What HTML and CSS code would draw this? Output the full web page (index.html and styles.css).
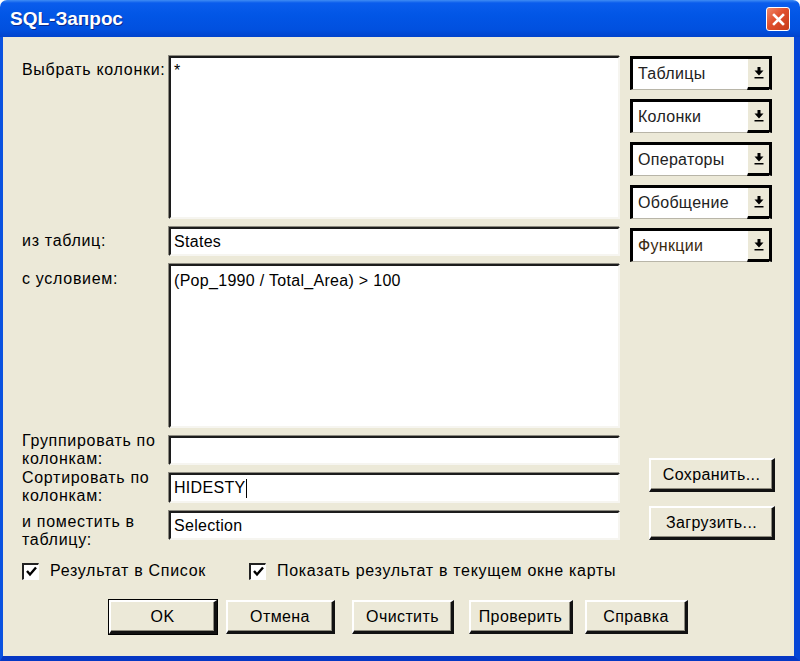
FILE: index.html
```html
<!DOCTYPE html>
<html lang="ru">
<head>
  <meta charset="UTF-8" />
  <title>SQL-Запрос</title>
  <link rel="stylesheet" href="styles.css">
</head>
<body>

  <div class="window">

    <!-- заголовок окна -->
    <div class="titlebar">
      <span class="title">SQL-Запрос</span>
      <button class="close-btn" title="Закрыть">
        <svg width="13" height="13" viewBox="0 0 13 13">
          <path d="M2 2 L11 11 M11 2 L2 11" stroke="#fff" stroke-width="2.6" stroke-linecap="square" />
        </svg>
      </button>
    </div>

    <div class="frame">
      <div class="client">

        <div class="main">
          <!-- поля запроса -->
          <div class="form">
            <label class="lbl">Выбрать колонки:</label>
            <div class="field area area-cols">*</div>

            <label class="lbl">из таблиц:</label>
            <div class="field input">States</div>

            <label class="lbl lbl-where">с условием:</label>
            <div class="field area area-where">(Pop_1990 / Total_Area) &gt; 100</div>

            <label class="lbl lbl-wrap">Группировать по<br>колонкам:</label>
            <div class="field input"></div>

            <label class="lbl lbl-wrap">Сортировать по<br>колонкам:</label>
            <div class="field input input-tall">HIDESTY<span class="caret"></span></div>

            <label class="lbl lbl-wrap lbl-into">и поместить в<br>таблицу:</label>
            <div class="field input">Selection</div>
          </div>

          <!-- списки и кнопки справа -->
          <div class="side">
            <div class="combo"><span class="combo-text">Таблицы</span><span class="combo-btn"><svg width="10" height="12" viewBox="0 0 10 12"><path d="M3.5 0h3v3.5h3L5 8.5 0.5 3.5h3z M0.5 10h9v1.6h-9z" fill="#000"/></svg></span></div>
            <div class="combo"><span class="combo-text">Колонки</span><span class="combo-btn"><svg width="10" height="12" viewBox="0 0 10 12"><path d="M3.5 0h3v3.5h3L5 8.5 0.5 3.5h3z M0.5 10h9v1.6h-9z" fill="#000"/></svg></span></div>
            <div class="combo"><span class="combo-text">Операторы</span><span class="combo-btn"><svg width="10" height="12" viewBox="0 0 10 12"><path d="M3.5 0h3v3.5h3L5 8.5 0.5 3.5h3z M0.5 10h9v1.6h-9z" fill="#000"/></svg></span></div>
            <div class="combo"><span class="combo-text">Обобщение</span><span class="combo-btn"><svg width="10" height="12" viewBox="0 0 10 12"><path d="M3.5 0h3v3.5h3L5 8.5 0.5 3.5h3z M0.5 10h9v1.6h-9z" fill="#000"/></svg></span></div>
            <div class="combo"><span class="combo-text combo-text-brown">Функции</span><span class="combo-btn"><svg width="10" height="12" viewBox="0 0 10 12"><path d="M3.5 0h3v3.5h3L5 8.5 0.5 3.5h3z M0.5 10h9v1.6h-9z" fill="#000"/></svg></span></div>

            <div class="side-buttons">
              <button class="btn btn-side">Сохранить...</button>
              <button class="btn btn-side">Загрузить...</button>
            </div>
          </div>
        </div>

        <!-- флажки -->
        <div class="checks">
          <label class="check">
            <span class="box"><svg width="13" height="13" viewBox="0 0 13 13"><path d="M2 6 L5 9.5 L11 2.5" fill="none" stroke="#000" stroke-width="2.4"/></svg></span>
            Результат в Список
          </label>
          <label class="check">
            <span class="box"><svg width="13" height="13" viewBox="0 0 13 13"><path d="M2 6 L5 9.5 L11 2.5" fill="none" stroke="#000" stroke-width="2.4"/></svg></span>
            Показать результат в текущем окне карты
          </label>
        </div>

        <!-- нижние кнопки -->
        <div class="actions">
          <button class="btn btn-default btn-ok">OK</button>
          <button class="btn btn-cancel">Отмена</button>
          <button class="btn btn-clear">Очистить</button>
          <button class="btn btn-verify">Проверить</button>
          <button class="btn btn-help">Справка</button>
        </div>

      </div>
    </div>
  </div>

</body>
</html>
```

FILE: styles.css
```css
/* ---------------------------------------------
   общее
--------------------------------------------- */
body {
  margin: 0;
  background: #fff;
  font-family: "Liberation Sans", Arial, sans-serif;
}

.window {
  width: 800px;
  height: 661px;
  display: flex;
  flex-direction: column;
}

/* ---------------------------------------------
   заголовок
--------------------------------------------- */
.titlebar {
  height: 37px;
  flex: none;
  display: flex;
  align-items: center;
  justify-content: space-between;
  padding: 0 10px 0 10px;
  box-sizing: border-box;
  border-radius: 7px 7px 0 0;
  background: linear-gradient(#3f8cf4 0, #0a5cec 3px, #0256e6 40%, #0150df 80%, #0143cc 100%);
}
.title {
  color: #fff;
  font-size: 19px;
  font-weight: bold;
  text-shadow: 1px 1px 0 #0a2a8c;
  padding-top: 1px;
}
.close-btn {
  width: 24px;
  height: 24px;
  padding: 0;
  display: flex;
  align-items: center;
  justify-content: center;
  border: 1px solid #fff;
  border-radius: 3px;
  background: linear-gradient(135deg, #f0896a 0%, #e0502d 45%, #c73b1a 100%);
  margin-top: 1px;
}

/* ---------------------------------------------
   рамка окна и клиентская область
--------------------------------------------- */
.frame {
  flex: 1;
  border-left: 3px solid #0a52e0;
  border-right: 6px solid #0646d6;
  border-bottom: 5px solid #0537c4;
  background: #ece9d8;
}
.client {
  padding: 19px 0 0 19px;
  font-size: 16px;
  color: #000;
}

.main {
  display: flex;
}

/* ---------------------------------------------
   поля слева
--------------------------------------------- */
.form {
  display: grid;
  grid-template-columns: 147px 451px;
  row-gap: 8px;
}
.lbl {
  line-height: 18px;
  padding-top: 5px;
  letter-spacing: 0.7px;
}
.lbl-where {
  padding-top: 6px;
}
.lbl-wrap {
  padding-top: 0;
  margin-top: -4px;
  margin-bottom: -10px;
}
.lbl-into {
  margin-top: 2px;
}

.field {
  background: #fff;
  border-top: 2px solid #1c1c1c;
  border-left: 2px solid #1c1c1c;
  border-right: 2px solid #f6f5f0;
  border-bottom: 2px solid #f6f5f0;
  box-shadow: -1px -1px 0 #8c8a80;
  box-sizing: border-box;
  padding: 0 3px;
  font-size: 16px;
  line-height: 18px;
  letter-spacing: 0.3px;
}
.area {
  height: 163px;
  padding-top: 4px;
}
.area-where {
  height: 164px;
  padding-top: 6px;
}
.input {
  height: 29px;
  display: flex;
  align-items: center;
}
.input-tall {
  height: 30px;
}
.caret {
  display: inline-block;
  width: 1px;
  height: 19px;
  background: #000;
  margin-left: 1px;
}

/* ---------------------------------------------
   правая колонка
--------------------------------------------- */
.side {
  margin-left: 10px;
  width: 145px;
  display: flex;
  flex-direction: column;
  gap: 9px;
}
.combo {
  width: 142px;
  height: 34px;
  box-sizing: border-box;
  display: flex;
  background: #fff;
  border-top: 3px solid #000;
  border-left: 3px solid #000;
  border-right: 3px solid #000;
  border-bottom: 1px solid #b8b5a8;
}
.combo-text {
  flex: 1;
  display: flex;
  align-items: center;
  padding-left: 5px;
  color: #222;
  font-size: 16px;
  letter-spacing: 0.3px;
}
.combo-text-brown {
  color: #3a2a10;
}
.combo-btn {
  width: 21px;
  display: flex;
  align-items: center;
  justify-content: center;
  background: #ece9d8;
  border-left: 1px solid #fff;
  border-bottom: 3px solid #000;
  margin-bottom: -1px;
}

.side-buttons {
  margin-top: auto;
  display: flex;
  flex-direction: column;
  align-items: flex-end;
  gap: 14px;
}

/* ---------------------------------------------
   кнопки
--------------------------------------------- */
.btn {
  height: 34px;
  padding: 0;
  background: #ece9d8;
  font-family: "Liberation Sans", Arial, sans-serif;
  font-size: 16px;
  letter-spacing: 0.4px;
  color: #000;
  border-top: 2px solid #fff;
  border-left: 2px solid #fff;
  border-right: 3px solid #111;
  border-bottom: 3px solid #111;
  box-shadow: inset -1px -1px 0 #8e8b7e;
}
.btn-side {
  width: 126px;
}
.btn-default {
  outline: 1px solid #000;
}

/* ---------------------------------------------
   флажки
--------------------------------------------- */
.checks {
  display: grid;
  grid-template-columns: 227px auto;
  margin-top: 22px;
  height: 18px;
  align-items: center;
}
.check {
  display: flex;
  align-items: center;
  gap: 11px;
  letter-spacing: 0.7px;
}
.box {
  width: 17px;
  height: 17px;
  box-sizing: border-box;
  background: #fff;
  border-top: 2px solid #222;
  border-left: 2px solid #222;
  border-right: 1px solid #fff;
  border-bottom: 1px solid #fff;
  display: flex;
  align-items: center;
  justify-content: center;
}

/* ---------------------------------------------
   нижний ряд кнопок
--------------------------------------------- */
.actions {
  display: flex;
  margin-top: 20px;
  padding-left: 87px;
}
.btn-ok     { width: 108px; }
.btn-cancel { width: 109px; margin-left: 9px; }
.btn-clear  { width: 102px; margin-left: 17px; }
.btn-verify { width: 104px; margin-left: 15px; }
.btn-help   { width: 103px; margin-left: 12px; }
```
